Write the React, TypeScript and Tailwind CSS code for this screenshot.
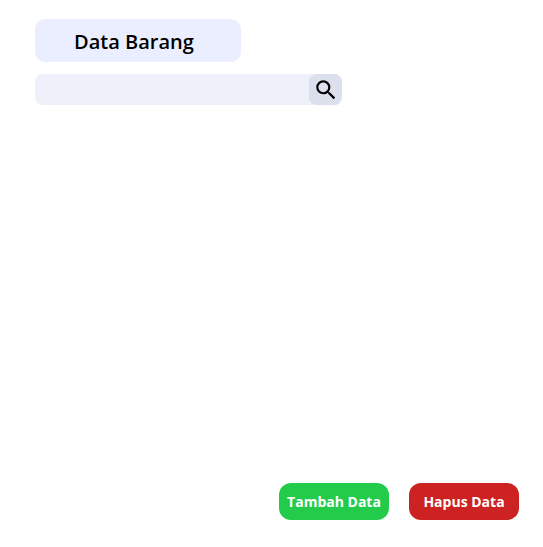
import { MdSearch } from "react-icons/md";

export default function App() {
  return (
    <main className="flex min-h-screen flex-col bg-white pt-[19px] pr-6 pb-[27px] pl-[35px] font-['Open_Sans',sans-serif]">
      <h1 className="flex h-[43px] w-[206px] items-center rounded-[10px] bg-[#ebeeff] pt-0.5 pl-[39px] text-[20px] leading-6 font-semibold text-black">
        Data Barang
      </h1>
      <form role="search" className="mt-3 flex h-[31px] w-[307px] rounded-lg bg-[#eef1fa]">
        <input
          type="search"
          aria-label="Cari barang"
          className="min-w-0 flex-1 bg-transparent px-3 text-sm outline-none"
        />
        <button
          type="button"
          aria-label="Cari"
          className="flex w-[33px] items-center justify-center rounded-lg bg-[#dcdfec] text-black"
        >
          <MdSearch className="size-[26px]" />
        </button>
      </form>
      <div className="mt-auto flex justify-end gap-5">
        <button
          type="button"
          className="h-[37px] w-[110px] rounded-xl bg-[#22cc4a] text-[14px] font-bold whitespace-nowrap text-white"
        >
          Tambah Data
        </button>
        <button
          type="button"
          className="h-[37px] w-[110px] rounded-xl bg-[#cc2222] text-[14px] font-bold whitespace-nowrap text-white"
        >
          Hapus Data
        </button>
      </div>
    </main>
  );
}
